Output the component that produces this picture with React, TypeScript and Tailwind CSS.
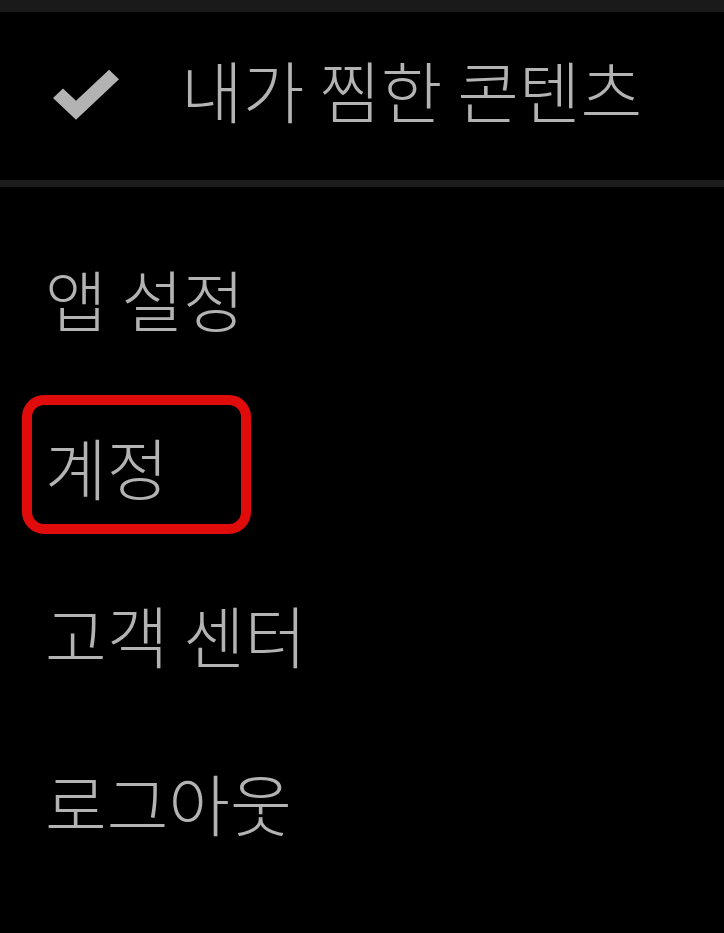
import React from "react";

const items = ["앱 설정", "계정", "고객 센터", "로그아웃"];

export default function App() {
  return (
    <div className="w-[724px] h-[933px] bg-black overflow-hidden font-['Noto_Sans_CJK_KR','Noto_Sans',sans-serif] font-light text-[#b3b3b3]">
      {/* top strip */}
      <div className="h-3 bg-[#1a1a1a]" />

      {/* my list row */}
      <div className="h-[168px] flex items-center">
        <div className="w-[181px] flex items-center pl-[50px]">
          <svg width="72" height="56" viewBox="0 0 72 56" fill="#b3b3b3">
            <path d="M3 33 L13 23 L26 36 L59 3 L69 13 L26 56 Z" transform="translate(0,-1) scale(1,0.94)" />
          </svg>
        </div>
        <span className="text-[67px] leading-none mb-[15px]">내가 찜한 콘텐츠</span>
      </div>

      <div className="h-[7px] bg-[#1c1c1c]" />

      {/* menu */}
      <div className="pt-[26px] flex flex-col">
        {items.map((label) => (
          <div key={label} className="relative h-[168px] flex items-center px-[45px]">
            {label === "계정" && (
              <div className="absolute left-[22px] top-[14px] w-[229px] h-[139px] border-[10px] border-[#e00b0b] rounded-[22px]" />
            )}
            <span className="relative text-[67px] leading-none">{label}</span>
          </div>
        ))}
      </div>
    </div>
  );
}
